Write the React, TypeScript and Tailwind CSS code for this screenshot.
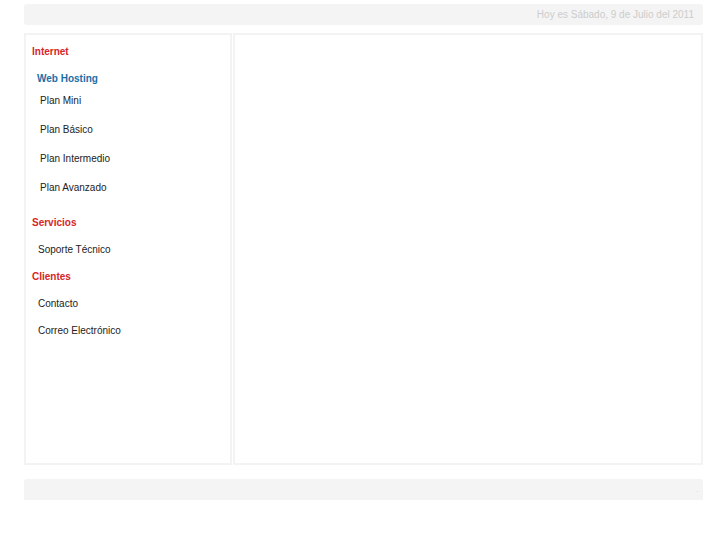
import React from 'react';

const font = { fontFamily: '"Liberation Sans", Arial, Helvetica, sans-serif' };

interface MenuItem {
     label: string;
     kind: 'section' | 'group' | 'link' | 'sublink';
     gap: string;
}

const items: MenuItem[] = [
     { label: 'Internet', kind: 'section', gap: 'mt-0' },
     { label: 'Web Hosting', kind: 'group', gap: 'mt-[15px]' },
     { label: 'Plan Mini', kind: 'sublink', gap: 'mt-[10px]' },
     { label: 'Plan Básico', kind: 'sublink', gap: 'mt-[17px]' },
     { label: 'Plan Intermedio', kind: 'sublink', gap: 'mt-[17px]' },
     { label: 'Plan Avanzado', kind: 'sublink', gap: 'mt-[17px]' },
     { label: 'Servicios', kind: 'section', gap: 'mt-[23px]' },
     { label: 'Soporte Técnico', kind: 'link', gap: 'mt-[15px]' },
     { label: 'Clientes', kind: 'section', gap: 'mt-[15px]' },
     { label: 'Contacto', kind: 'link', gap: 'mt-[15px]' },
     { label: 'Correo Electrónico', kind: 'link', gap: 'mt-[15px]' },
];

const kindClass = {
     section: 'pl-[6px] font-bold text-[#d7252a]',
     group: 'pl-[11px] font-bold text-[#1b6ea6]',
     sublink: 'pl-[14px] text-[#222]',
     link: 'pl-[12px] text-[#222]',
};

export default function App() {
     return (
          <div className="min-h-[545px] bg-white" style={font}>
               <div className="mx-auto w-[679px] pt-[4px]">
                    {/* header */}
                    <div className="flex h-[21px] items-center justify-end rounded-[3px] bg-[#f4f4f4] pr-[9px] text-[10px] leading-[12px] text-[#cccccc]">
                         Hoy es Sábado, 9 de Julio del 2011
                    </div>

                    {/* body */}
                    <div className="mt-[8px] flex h-[432px] gap-[1px]">
                         <div className="w-[208px] border-2 border-[#f3f3f3] bg-white pt-[11px]">
                              {items.map((item) => (
                                   <div
                                        key={item.label}
                                        className={`${item.gap} ${kindClass[item.kind]} text-[10px] leading-[12px]`}
                                   >
                                        {item.label}
                                   </div>
                              ))}
                         </div>
                         <div className="flex-1 border-2 border-[#f3f3f3] bg-white" />
                    </div>

                    {/* footer */}
                    <div className="mt-[14px] flex h-[21px] items-center justify-end rounded-t-[3px] bg-[#f4f4f4] pr-[5px] text-[6px] leading-none text-[#bdbdbd]">
                         .
                    </div>
               </div>
          </div>
     );
}
